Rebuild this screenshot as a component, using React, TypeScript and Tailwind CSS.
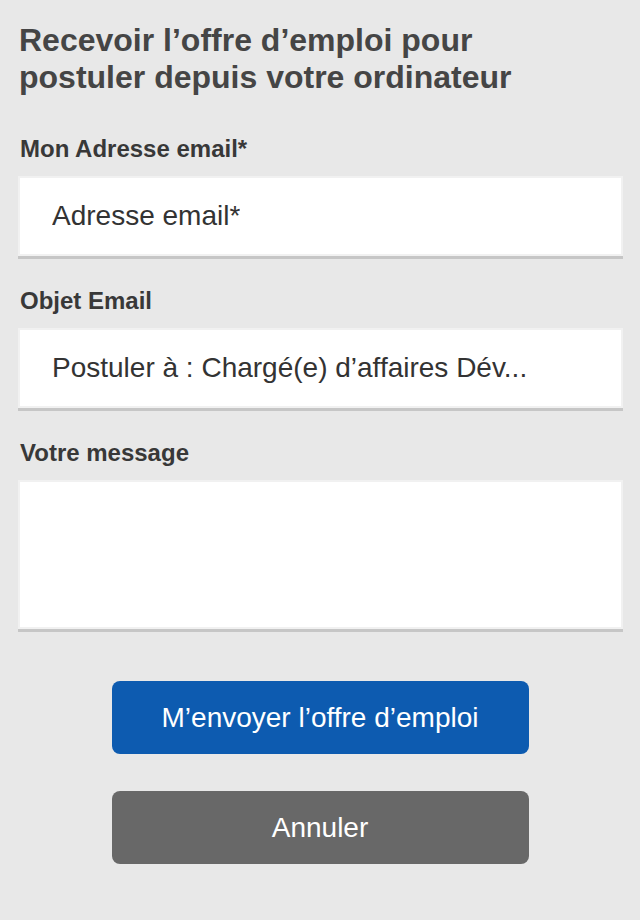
import React from "react";

const font = { fontFamily: '"Liberation Sans", Arial, sans-serif' };

const Field = ({ label, value, tall }: { label: string; value?: string; tall?: boolean }) => (
  <div className="flex flex-col">
    <label className="pl-[2px] text-[24px] leading-[28px] font-bold text-[#383838]">{label}</label>
    <div className="mt-[13px] border-b-[3px] border-[#c6c6c6]">
      <div
        className={`flex items-center border-2 border-[#f1f1f1] bg-white px-[32px] ${
          tall ? "h-[149px]" : "h-[80px]"
        }`}
      >
        {value && <span className="truncate text-[28px] leading-[32px] text-[#333]">{value}</span>}
      </div>
    </div>
  </div>
);

export default function App() {
  return (
    <div className="min-h-[920px] w-full bg-[#e8e8e8] pt-[22px] pl-[18px] pr-[17px]" style={font}>
      <h1 className="pl-[1px] text-[32px] leading-[37px] font-bold text-[#454545]">
        Recevoir l’offre d’emploi pour
        <br />
        postuler depuis votre ordinateur
      </h1>
      <div className="mt-[39px] flex flex-col gap-[28px]">
        <Field label="Mon Adresse email*" value="Adresse email*" />
        <Field label="Objet Email" value="Postuler à : Chargé(e) d’affaires Dév..." />
        <Field label="Votre message" tall />
      </div>
      <div className="mt-[49px] flex flex-col items-center gap-[37px] pr-[1px]">
        <button className="h-[73px] w-[417px] rounded-[8px] bg-[#0d5bb0] text-[28px] text-white">
          M’envoyer l’offre d’emploi
        </button>
        <button className="h-[73px] w-[417px] rounded-[8px] bg-[#686868] text-[28px] text-white">
          Annuler
        </button>
      </div>
    </div>
  );
}
